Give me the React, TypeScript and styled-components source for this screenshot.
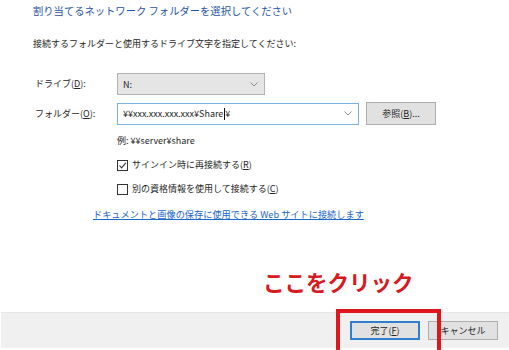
import React from "react";
import styled, { createGlobalStyle } from "styled-components";

const Global = createGlobalStyle`
  html, body { margin: 0; padding: 0; background: #ffffff; }
  body { font-family: "Noto Sans CJK JP", "Noto Sans", sans-serif; color: #262626; }
`;

const Dialog = styled.div`
  position: relative;
  width: 509px;
  height: 350px;
  display: flex;
  flex-direction: column;
  overflow: hidden;
  background: #fff;
`;

const Content = styled.div`
  flex: 1;
  padding-left: 33px;
  display: flex;
  flex-direction: column;
`;

const Title = styled.div`
  font-size: 10.3px;
  line-height: 22px;
  color: #1f55a6;
  white-space: nowrap;
`;

const Text = styled.div<{ $mt?: number }>`
  font-size: 9px;
  line-height: 16px;
  margin-top: ${(p) => p.$mt ?? 0}px;
  white-space: nowrap;
`;

const FormGrid = styled.div`
  margin-top: 21px;
  padding-left: 2px;
  display: grid;
  grid-template-columns: 82px auto;
  row-gap: 7px;
  align-items: center;
`;

const Label = styled.div`
  font-size: 9px;
  line-height: 22px;
  white-space: nowrap;
`;

const FieldRow = styled.div`
  display: flex;
  align-items: center;
  gap: 7px;
`;

const Combo = styled.div<{ $w: number; $editable?: boolean }>`
  box-sizing: border-box;
  width: ${(p) => p.$w}px;
  height: 22px;
  display: flex;
  align-items: center;
  justify-content: space-between;
  padding: 0 6px 0 5px;
  font-size: 9px;
  background: ${(p) => (p.$editable ? "#ffffff" : "#e5e5e5")};
  border: 1px solid ${(p) => (p.$editable ? "#7db2e2" : "#b3b3b3")};
`;

const Caret = styled.span`
  display: inline-block;
  width: 1px;
  height: 12px;
  background: #111;
  vertical-align: middle;
  margin: 0 0.5px;
`;

const Button = styled.div<{ $w: number; $h: number; $primary?: boolean }>`
  box-sizing: border-box;
  width: ${(p) => p.$w}px;
  height: ${(p) => p.$h}px;
  display: flex;
  align-items: center;
  justify-content: center;
  font-size: 9px;
  background: #e1e1e1;
  border: 1px solid ${(p) => (p.$primary ? "#2f7fcf" : "#adadad")};
  box-shadow: ${(p) => (p.$primary ? "inset 0 0 0 1px #2f7fcf" : "none")};
  white-space: nowrap;
`;

const Options = styled.div`
  margin-top: 8px;
  margin-left: 84px;
  display: flex;
  flex-direction: column;
  gap: 8px;
`;

const CheckRow = styled.label`
  display: flex;
  align-items: center;
  gap: 4px;
  font-size: 9px;
  line-height: 16px;
  white-space: nowrap;
`;

const Box = styled.span`
  box-sizing: border-box;
  width: 11px;
  height: 11px;
  border: 1px solid #333;
  background: #fff;
  display: flex;
  align-items: center;
  justify-content: center;
`;

const Link = styled.a`
  margin-top: 9px;
  margin-left: 60px;
  font-size: 9.2px;
  line-height: 16px;
  color: #1a66c9;
  text-decoration: underline;
  white-space: nowrap;
`;

const Callout = styled.div`
  margin-top: 45px;
  margin-left: 230px;
  font-size: 21.5px;
  line-height: 30px;
  font-weight: 700;
  color: #d71920;
  white-space: nowrap;
`;

const Footer = styled.div`
  height: 36px;
  margin-bottom: 2px;
  margin-left: 1px;
  background: #f0f0f0;
  border-top: 1px solid #e6e6e6;
  box-sizing: border-box;
  display: flex;
  align-items: center;
  justify-content: flex-end;
  gap: 8px;
  padding-right: 11px;
`;

const Highlight = styled.div`
  position: absolute;
  left: 336px;
  top: 309px;
  width: 105px;
  height: 48px;
  box-sizing: border-box;
  border: 4px solid #e0161f;
  pointer-events: none;
`;

const Chevron = () => (
  <svg width="8" height="5" viewBox="0 0 8 5">
    <polyline points="0.5,0.5 4,4 7.5,0.5" fill="none" stroke="#8a8a8a" strokeWidth="1" />
  </svg>
);

const Check = () => (
  <svg width="9" height="9" viewBox="0 0 9 9">
    <polyline points="1.5,4.5 3.6,6.8 7.8,1.8" fill="none" stroke="#333" strokeWidth="1.1" />
  </svg>
);

export default function App() {
  return (
    <>
      <Global />
      <Dialog>
        <Content>
          <Title>割り当てるネットワーク フォルダーを選択してください</Title>
          <Text $mt={14}>接続するフォルダーと使用するドライブ文字を指定してください:</Text>
          <FormGrid>
            <Label>
              ドライブ(<u>D</u>):
            </Label>
            <FieldRow>
              <Combo $w={148}>
                <span>N:</span>
                <Chevron />
              </Combo>
            </FieldRow>
            <Label>
              フォルダー(<u>O</u>):
            </Label>
            <FieldRow>
              <Combo $w={242} $editable>
                <span>
                  ¥¥xxx.xxx.xxx.xxx¥Share
                  <Caret />¥
                </span>
                <Chevron />
              </Combo>
              <Button $w={70} $h={23}>
                参照(<u>B</u>)...
              </Button>
            </FieldRow>
          </FormGrid>
          <Options>
            <Text>例: ¥¥server¥share</Text>
            <CheckRow>
              <Box>
                <Check />
              </Box>
              <span>
                サインイン時に再接続する(<u>R</u>)
              </span>
            </CheckRow>
            <CheckRow>
              <Box />
              <span>
                別の資格情報を使用して接続する(<u>C</u>)
              </span>
            </CheckRow>
          </Options>
          <Link>ドキュメントと画像の保存に使用できる Web サイトに接続します</Link>
          <Callout>ここをクリック</Callout>
        </Content>
        <Footer>
          <Button $w={70} $h={19} $primary>
            完了(<u>F</u>)
          </Button>
          <Button $w={70} $h={19}>
            キャンセル
          </Button>
        </Footer>
        <Highlight />
      </Dialog>
    </>
  );
}
